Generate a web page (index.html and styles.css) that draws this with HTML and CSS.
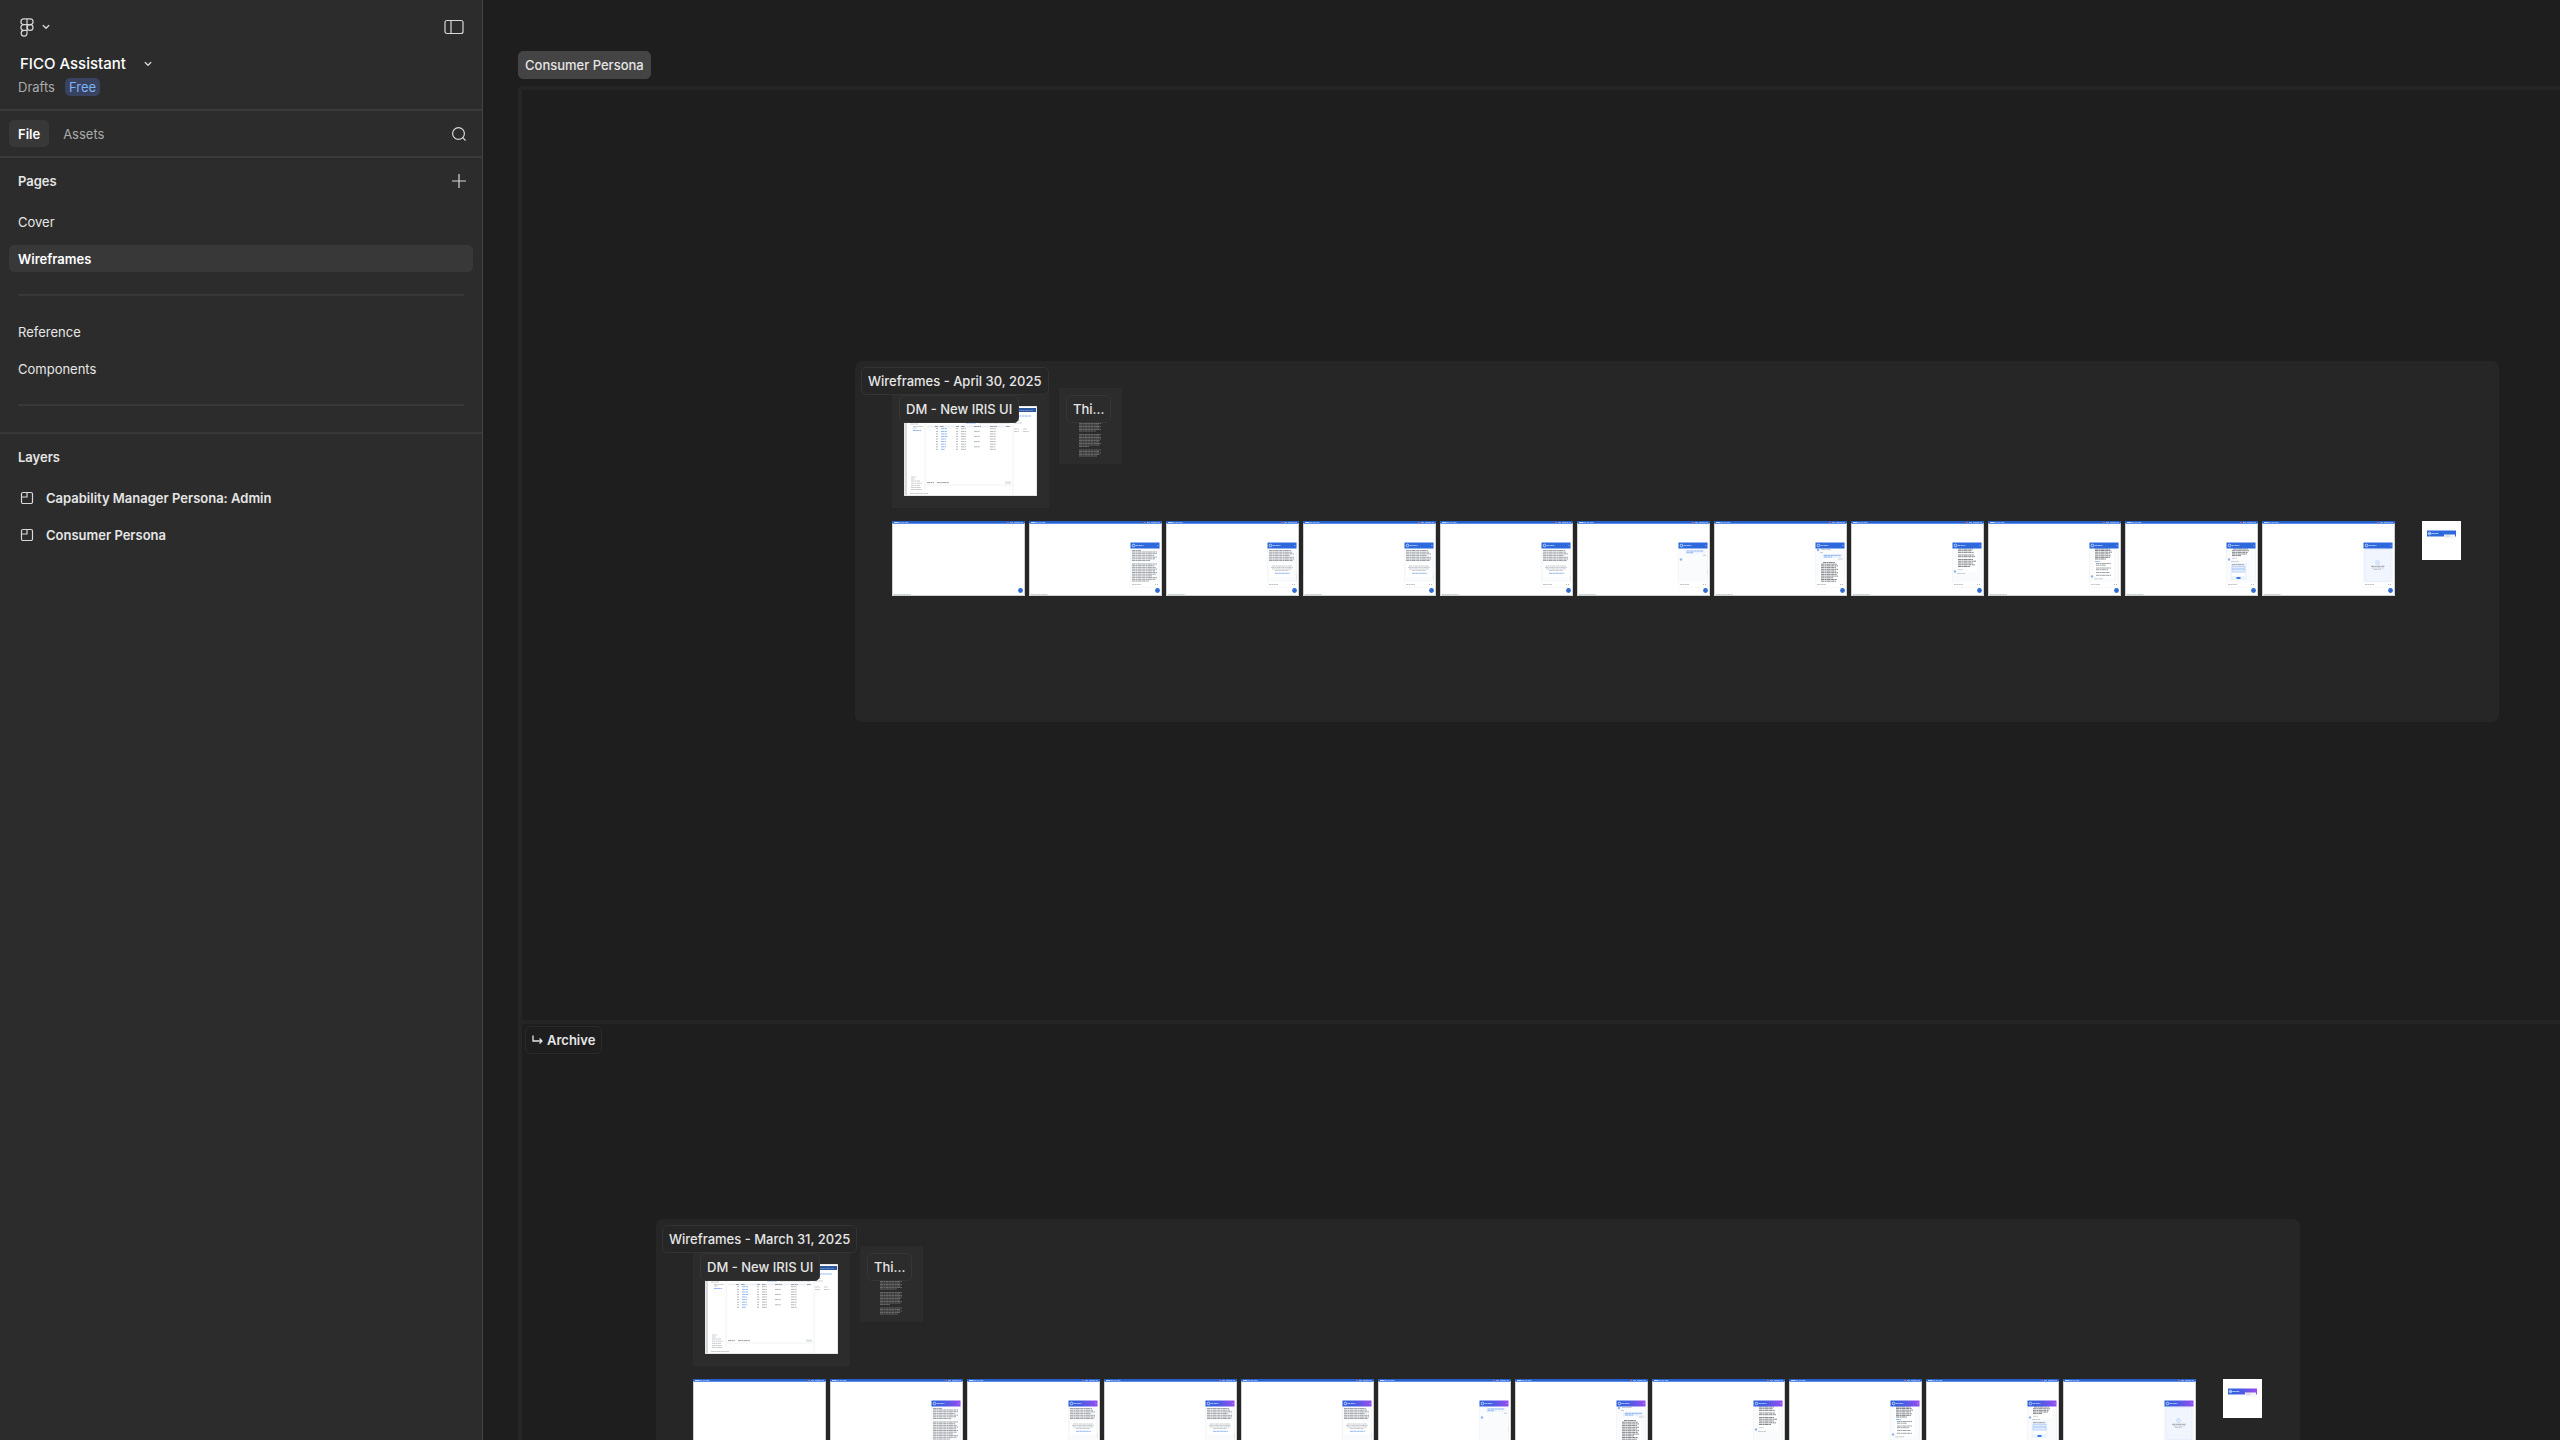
FILE: index.html
```
<!DOCTYPE html>
<html lang="en">
<head>
    <meta charset="UTF-8">
    <title>FICO Assistant</title>
    <link rel="stylesheet" href="styles.css">
</head>
<body>
    <!-- shared drawings for the canvas thumbnails -->
    <svg class="defs" width="0" height="0" aria-hidden="true">
        <defs>
            <linearGradient id="violet">
                <stop offset="0" stop-color="#2f62dc"/>
                <stop offset="0.45" stop-color="#4a5ce4"/>
                <stop offset="1" stop-color="#984df0"/>
            </linearGradient>
            <g id="screen">
                <rect width="133" height="75" fill="#fff"/>
                <rect width="133" height="2" fill="#2860cb"/>
                <rect y="2" width="133" height="1" fill="#5b8ee8"/>
                <path d="M2 1.5h4" stroke="#c4d6f8"/>
                <path d="M6 1.5h11" stroke="#7ea3e6" stroke-dasharray="3 .5"/>
                <path d="M115 1.5h2" stroke="#d0605c"/>
                <path d="M118 1.5h13" stroke="#7ea3e6" stroke-dasharray="3 1 6 .5"/>
                <path d="M2 73.5h17" stroke="#a9bdb5" stroke-width=".7" stroke-dasharray="2 .4"/>
                <path d="M.5 2v72.5h132V2" fill="none" stroke="#bbb" stroke-width=".7"/>
                <circle cx="128.5" cy="69.5" r="2.4" fill="#3169d2"/>
            </g>
            <g id="panel">
                <rect x="101" y="22" width="30" height="44.5" fill="#f1f2f3"/>
                <rect x="101.5" y="22" width="29" height="44" fill="#fafbfc"/>
                <rect x="101.5" y="61" width="29" height="5" fill="#fff"/>
                <path d="M103 63.5h9" stroke="#b3b7bc" stroke-width=".8" stroke-dasharray="2 .4"/>
                <path d="M126 63.5h1M128 63.5h1" stroke="#b3b7bc"/>
            </g>
            <g id="logo">
                <circle cx="104.5" cy="24.5" r="1.3" fill="none" stroke="#dbe7ff" stroke-width=".8"/>
                <path d="M106.5 24.5h8" stroke="#a8c4f7" stroke-width=".9" stroke-dasharray="3 .4"/>
                <path d="M128 24.5h1.5" stroke="#a8c4f7" stroke-width=".5"/>
            </g>
            <g id="head-blue">
                <rect x="101.5" y="21.5" width="29" height="6" fill="#2d69dd"/>
                <use href="#logo"/>
            </g>
            <g id="head-violet">
                <rect x="101.5" y="21.5" width="29" height="6" fill="url(#violet)"/>
                <use href="#logo"/>
            </g>
            <g id="chat-intro">
                <use href="#panel"/>
                <path class="ink" d="M103 29.5h9M103 31h25M103 32.7h25M103 34.4h22M103 36.1h25M103 37.8h23M103 39.5h18M103 43h25M103 44.7h22M103 46.4h24M103 48.1h25M103 49.8h23M103 51.5h25M103 53.2h24M103 54.9h20M103 56.6h25M103 58.3h24M103 60h17"/>
            </g>
            <g id="chat-consent">
                <use href="#panel"/>
                <path class="ink" d="M103 29.5h22M103 31.2h23M103 32.9h25M103 34.6h21M103 36.3h25M103 38h25M103 39.5h24"/>
                <rect x="103.5" y="42" width="25" height="14" fill="#fff"/>
                <path class="ink pale" d="M106 45h20M105 46.5h22M106 48h20M109 49.5h14"/>
                <path class="link" d="M109 52.3h15"/>
                <path d="M130.5 54v5" stroke="#dadde1" stroke-width=".6"/>
            </g>
            <g id="chat-question">
                <use href="#panel"/>
                <rect x="108" y="29" width="20" height="4" fill="#f0f5fe"/>
                <path class="link" d="M109.5 30h17M109.5 31.7h7"/>
                <path class="ink pale" d="M126 34.3h3"/>
                <rect x="106" y="36" width="4" height="4" fill="#fff"/>
                <circle class="bot" cx="104" cy="38.5" r="1.2"/>
                <path d="M130.5 48v5" stroke="#dadde1" stroke-width=".6"/>
            </g>
            <g id="chat-answer">
                <use href="#panel"/>
                <circle class="bot" cx="104" cy="29" r="1.2"/>
                <path class="ink pale" d="M107 28.5h10M106 31.5h3M124 38h5"/>
                <rect x="108" y="33" width="20" height="4" fill="#eaf1fe"/>
                <path class="link" d="M110 34.4h17M110 36h8"/>
                <rect x="106" y="40" width="20" height="21" fill="#fff"/>
                <path class="ink dark" d="M109 41.5h12M107 43.2h16M107 44.9h17M107 46.6h15M107 48.3h17M107 50h15M107 51.7h17M107 53.4h16M107 55.1h17M107 56.8h12M107 58.5h16M107 60.2h15"/>
            </g>
            <g id="chat-scrolled">
                <use href="#panel"/>
                <rect x="106" y="28" width="20" height="23" fill="#fff"/>
                <path class="ink dark" d="M107 28h15M107 29.7h14M107 31.4h16M107 34h16M107 35.7h17M107 38.5h15M107 40.2h18M107 42h15M107 43.8h17M107 45.5h12"/>
                <path class="ink pale" d="M107 48.7h5M106 52.5h8"/>
                <circle class="bot" cx="104" cy="50.5" r="1.2"/>
            </g>
            <g id="chat-sources">
                <use href="#panel"/>
                <rect x="106" y="28" width="20" height="29" fill="#fff"/>
                <path class="ink dark" d="M107 28h15M107 29.5h16M107 31.2h17M107 32.9h15M107 34.8h16M107 36.4h15M107 38h11"/>
                <path class="link" d="M107 40.5h5"/>
                <path class="ink" d="M108 42.5h15M108 44.2h10M108 47h15M108 48.7h12M108 51.5h14M108 54.3h15"/>
                <path class="ink pale" d="M106 57.8h9"/>
                <circle class="bot" cx="104" cy="55.5" r="1.2"/>
            </g>
            <g id="chat-feedback">
                <use href="#panel"/>
                <rect x="106" y="28" width="20" height="11" fill="#fff"/>
                <path class="ink dark" d="M108 28h15M107 29.7h17M107 31.4h16M107 33h15M107 34.6h9"/>
                <path class="ink pale" d="M107 37.3h5M106 40.5h8"/>
                <circle class="bot" cx="104" cy="38.5" r="1.2"/>
                <rect x="105.5" y="42" width="16" height="17" fill="#edf3fd"/>
                <path class="ink" d="M107 43.7h12"/>
                <rect x="107" y="45.3" width="13" height="2.4" fill="#e0ebfd" stroke="#9fc0f6" stroke-width=".5"/>
                <rect x="107" y="48.6" width="13" height="2.4" fill="#e0ebfd" stroke="#9fc0f6" stroke-width=".5"/>
                <rect x="107" y="52" width="13" height="3" fill="#fff"/>
                <rect x="111.5" y="56" width="4" height="2" fill="#3f7ce2"/>
            </g>
            <g id="chat-loading">
                <use href="#panel"/>
                <rect x="103" y="28.5" width="26" height="32" rx="1" fill="#f1f6fe" stroke="#dfe9fb" stroke-width=".7"/>
                <circle cx="115.5" cy="41.5" r="1.9" fill="#e2edfd" stroke="#9fc0f6" stroke-width=".5"/>
                <path class="ink" d="M109 45.3h14"/>
                <path class="ink pale" d="M110 47h12M112 48.5h7"/>
            </g>
            <g id="iris">
                <rect width="133" height="90" fill="#fff"/>
                <path d="M0 0h133v90H0z" fill="none" stroke="#cfcfcf"/>
                <rect x="1" y="2" width="131" height="4" fill="#2c579c"/>
                <path d="M115 4.5h14" stroke="#5f84bd" stroke-dasharray="5 .5"/>
                <rect x="1" y="6" width="2" height="83" fill="#d9dadb"/>
                <path d="M21 16v68M109 13v76M22 79h87" stroke="#f1f2f3" fill="none"/>
                <path class="link" d="M9 24.5h8M62 17h10M114 10h13"/>
                <path class="ink pale" d="M6 18h8M9 20.5h10M9 22h4M75 17h31M110 14.5h6M110 17h8M110 23h5M119 23h4M110 25.5h5M119 25.5h6M6 87.5h18"/>
                <rect x="23" y="19.5" width="84" height="2" fill="#eef2f8"/>
                <path class="ink" d="M31 20.5h3M36 20.5h4M52 20.5h3M57 20.5h4M70 20.5h7M86 20.5h7M102 20.5h4"/>
                <path class="ink cell" d="M32 22.7h2M32 25.4h2M32 27.9h2M32 30.4h2M32 33h2M32 35.6h2M32 38.2h2M32 40.8h2M32 43.3h2M52 22.7h2M52 25.4h2M52 27.9h2M52 30.4h2M52 33h2M52 35.6h2M52 38.2h2M52 40.8h2M52 43.3h2M57 22.7h5M57 25.4h5M57 27.9h5M57 30.4h5M57 33h5M57 35.6h5M57 38.2h5M57 40.8h5M57 43.3h5M70 25.4h6M70 30.4h6M70 35.6h6M70 40.8h6M86 22.7h6M86 25.4h6M86 27.9h6M86 30.4h6M86 33h6M86 35.6h6M86 38.2h6M86 40.8h5M86 43.3h6"/>
                <path class="link" d="M37 22.7h6M37 25.4h6M37 27.9h6M37 30.4h7M37 33h5M37 35.6h5M37 38.2h5M37 40.8h5M37 43.3h4"/>
                <path class="ink pale" d="M7 71h5M7 73h4M7 75h9M7 77.2h11M7 79.4h9M7 81.5h10M7 83.5h11"/>
                <path class="ink" d="M23 76.6h7M33 76.6h12"/>
                <rect x="101" y="75.5" width="6" height="2.2" fill="#dce1e9"/>
            </g>
            <g id="note">
                <path class="note-text" d="M0 .5h22M0 2h20M0 3.5h22M0 5h21M0 6.5h22M0 8h17M0 11.5h22M0 13h21M0 14.5h22M0 16h22M0 17.5h21M0 19h20M0 20.5h22M0 22h21M0 23.5h10M0 27h22M0 28.5h20M0 30h22M0 31.5h20M0 33h18"/>
            </g>
            <g id="menu-items">
                <path d="M6.5 12.5h10" stroke="#a8c4f7" stroke-dasharray="3 .4"/>
                <circle cx="7.5" cy="12.5" r="1.3" fill="none" stroke="#dbe7ff" stroke-width=".8"/>
                <rect x="22" y="13.5" width="11" height="4" fill="#f4f4f6"/>
                <path class="ink pale" d="M23 15h5"/>
            </g>
            <symbol id="section-icon" viewBox="0 0 14 14">
                <path d="M3 1.5h8a1.5 1.5 0 0 1 1.500 1.500v8a1.500 1.500 0 0 1-1.500 1.500H3A1.500 1.500 0 0 1 1.500 11V3A1.500 1.500 0 0 1 3 1.500zM1.500 6H7V1.500" fill="none" stroke="#d8d8d8" stroke-width="1.200"/>
            </symbol>
            <symbol id="chevron" viewBox="0 0 8 6">
                <path d="M1.200 1.500 4 4.300 6.800 1.500" fill="none" stroke="#d8d8d8" stroke-width="1.300" stroke-linecap="round"/>
            </symbol>
        </defs>
    </svg>

    <aside class="sidebar">
        <header class="file-header">
            <div class="toolbar">
                <button class="icon-btn main-menu" aria-label="Main menu">
                    <svg width="14" height="19" viewBox="0 0 14 19" fill="none" stroke="#d8d8d8" stroke-width="1.200">
                        <path d="M7 .8H3.800a2.900 2.900 0 0 0 0 5.800H7zM7 .8h3.200a2.900 2.900 0 0 1 0 5.800H7zM7 6.600H3.800a2.900 2.900 0 0 0 0 5.800H7zM7 12.400H3.800A2.900 2.900 0 1 0 7 15.300z"/>
                        <circle cx="10.100" cy="9.500" r="2.900"/>
                    </svg>
                    <svg width="8" height="6"><use href="#chevron"/></svg>
                </button>
                <button class="icon-btn" aria-label="Minimize UI">
                    <svg width="20" height="16" viewBox="0 0 20 16" fill="none" stroke="#d8d8d8" stroke-width="1.200">
                        <rect x="1" y="1.500" width="18" height="13" rx="2"/>
                        <path d="M7 1.500v13"/>
                    </svg>
                </button>
            </div>
            <button class="icon-btn file-name">
                FICO Assistant
                <svg width="8" height="6"><use href="#chevron"/></svg>
            </button>
            <div class="location">
                <a href="#drafts">Drafts</a>
                <span class="badge">Free</span>
            </div>
        </header>

        <nav class="tabs">
            <button class="tab active">File</button>
            <button class="tab">Assets</button>
            <button class="icon-btn search" aria-label="Find">
                <svg width="14" height="14" viewBox="0 0 14 14" fill="none" stroke="#d8d8d8" stroke-width="1.200">
                    <circle cx="6.500" cy="6.500" r="5.900"/>
                    <path d="M10.700 10.700 13.500 13.500"/>
                </svg>
            </button>
        </nav>

        <section class="pages">
            <div class="panel-title">
                <h2>Pages</h2>
                <button class="icon-btn" aria-label="Add new page">
                    <svg width="14" height="14" viewBox="0 0 14 14" stroke="#d8d8d8" stroke-width="1.200">
                        <path d="M7 0v14M0 7h14"/>
                    </svg>
                </button>
            </div>
            <ul class="list">
                <li><a class="row" href="#cover">Cover</a></li>
                <li><a class="row selected" href="#wireframes">Wireframes</a></li>
                <li class="separator"></li>
                <li><a class="row" href="#reference">Reference</a></li>
                <li><a class="row" href="#components">Components</a></li>
                <li class="separator"></li>
            </ul>
        </section>

        <section class="layers">
            <div class="panel-title">
                <h2>Layers</h2>
            </div>
            <ul class="list">
                <li><a class="row layer" href="#admin"><svg width="14" height="14"><use href="#section-icon"/></svg>Capability Manager Persona: Admin</a></li>
                <li><a class="row layer" href="#consumer"><svg width="14" height="14"><use href="#section-icon"/></svg>Consumer Persona</a></li>
            </ul>
        </section>
    </aside>

    <main class="canvas">
        <span class="label label-top">Consumer Persona</span>
        <div class="zone zone-consumer"></div>
        <div class="zone zone-archive">
            <span class="label label-archive">
                <svg width="11" height="10" viewBox="0 0 11 10" fill="none" stroke="#e6e6e6" stroke-width="1.300">
                    <path d="M1 .5V6h9M7.500 3.500 10 6 7.500 8.500"/>
                </svg>
                Archive
            </span>
        </div>

        <section class="board board-april">
            <span class="label label-board">Wireframes - April 30, 2025</span>
            <div class="notes">
                <div class="frame frame-iris">
                    <span class="label label-frame">DM - New IRIS UI</span>
                    <svg width="133" height="90"><use href="#iris"/></svg>
                </div>
                <div class="frame frame-note">
                    <span class="label label-frame">Thi...</span>
                    <svg width="22" height="34"><use href="#note"/></svg>
                </div>
            </div>
            <div class="screens">
                <svg width="133" height="75"><use href="#screen"/></svg>
                <svg width="133" height="75"><use href="#screen"/><use href="#chat-intro"/><use href="#head-blue"/></svg>
                <svg width="133" height="75"><use href="#screen"/><use href="#chat-consent"/><use href="#head-blue"/></svg>
                <svg width="133" height="75"><use href="#screen"/><use href="#chat-consent"/><use href="#head-blue"/></svg>
                <svg width="133" height="75"><use href="#screen"/><use href="#chat-consent"/><use href="#head-blue"/></svg>
                <svg width="133" height="75"><use href="#screen"/><use href="#chat-question"/><use href="#head-blue"/></svg>
                <svg width="133" height="75"><use href="#screen"/><use href="#chat-answer"/><use href="#head-blue"/></svg>
                <svg width="133" height="75"><use href="#screen"/><use href="#chat-scrolled"/><use href="#head-blue"/></svg>
                <svg width="133" height="75"><use href="#screen"/><use href="#chat-sources"/><use href="#head-blue"/></svg>
                <svg width="133" height="75"><use href="#screen"/><use href="#chat-feedback"/><use href="#head-blue"/></svg>
                <svg width="133" height="75"><use href="#screen"/><use href="#chat-loading"/><use href="#head-blue"/></svg>
                <svg class="menu-screen" width="39" height="39">
                    <rect width="39" height="39" fill="#fff"/>
                    <rect x="5" y="9.500" width="29" height="6" fill="#2d69dd"/>
                    <use href="#menu-items"/>
                </svg>
            </div>
        </section>

        <section class="board board-march">
            <span class="label label-board">Wireframes - March 31, 2025</span>
            <div class="notes">
                <div class="frame frame-iris">
                    <span class="label label-frame">DM - New IRIS UI</span>
                    <svg width="133" height="90"><use href="#iris"/></svg>
                </div>
                <div class="frame frame-note">
                    <span class="label label-frame">Thi...</span>
                    <svg width="22" height="34"><use href="#note"/></svg>
                </div>
            </div>
            <div class="screens">
                <svg width="133" height="75"><use href="#screen"/></svg>
                <svg width="133" height="75"><use href="#screen"/><use href="#chat-intro"/><use href="#head-violet"/></svg>
                <svg width="133" height="75"><use href="#screen"/><use href="#chat-consent"/><use href="#head-violet"/></svg>
                <svg width="133" height="75"><use href="#screen"/><use href="#chat-consent"/><use href="#head-violet"/></svg>
                <svg width="133" height="75"><use href="#screen"/><use href="#chat-consent"/><use href="#head-violet"/></svg>
                <svg width="133" height="75"><use href="#screen"/><use href="#chat-question"/><use href="#head-violet"/></svg>
                <svg width="133" height="75"><use href="#screen"/><use href="#chat-answer"/><use href="#head-violet"/></svg>
                <svg width="133" height="75"><use href="#screen"/><use href="#chat-scrolled"/><use href="#head-violet"/></svg>
                <svg width="133" height="75"><use href="#screen"/><use href="#chat-sources"/><use href="#head-violet"/></svg>
                <svg width="133" height="75"><use href="#screen"/><use href="#chat-feedback"/><use href="#head-violet"/></svg>
                <svg width="133" height="75"><use href="#screen"/><use href="#chat-loading"/><use href="#head-violet"/></svg>
                <svg class="menu-screen" width="39" height="39">
                    <rect width="39" height="39" fill="#fff"/>
                    <rect x="5" y="9.500" width="29" height="6" fill="url(#violet)"/>
                    <use href="#menu-items"/>
                </svg>
            </div>
        </section>
    </main>
</body>
</html>
```
FILE: styles.css
```
* {
    box-sizing: border-box;
}

body {
    display: grid;
    grid-template-columns: 483px 1fr;
    height: 100vh;
    margin: 0;
    overflow: hidden;
    background-color: #1e1e1e;
    color: #e6e6e6;
    font-family: Inter, sans-serif;
    font-size: 13px;
    line-height: 18px;
}

svg {
    display: block;
    flex: none;
}

a {
    color: inherit;
    text-decoration: none;
}

.defs {
    position: absolute;
}

.icon-btn {
    display: flex;
    align-items: center;
    padding: 0;
    border: 0;
    background: none;
    color: inherit;
    font: inherit;
    cursor: pointer;
}

/* Sidebar */
.sidebar {
    border-right: 1px solid #444;
    background-color: #2c2c2c;
}

.file-header {
    height: 111px;
    padding: 17px 18px 0 18px;
    border-bottom: 2px solid #3a3a3a;
}

.toolbar {
    display: flex;
    justify-content: space-between;
    height: 20px;
    padding-left: 2px;
}

.main-menu {
    gap: 8px;
}

.file-name {
    gap: 18px;
    height: 20px;
    margin-top: 17px;
    padding-left: 2px;
    color: #fff;
    font-size: 15px;
    font-weight: 500;
}

.location {
    display: flex;
    align-items: center;
    gap: 10px;
    margin-top: 4px;
    color: #aaa;
}

.badge {
    padding: 0 4px;
    border-radius: 5px;
    background-color: #394360;
    color: #7cb4f5;
}

.tabs {
    display: flex;
    align-items: center;
    gap: 5px;
    height: 47px;
    padding: 0 16px 0 9px;
    border-bottom: 2px solid #3a3a3a;
}

.tab {
    height: 27px;
    padding: 0 9px;
    border: 0;
    border-radius: 5px;
    background: none;
    color: #aaa;
    font: inherit;
    cursor: pointer;
}

.tab.active {
    background-color: #383838;
    color: #fff;
    font-weight: 600;
}

.search {
    margin-left: auto;
}

.pages {
    padding-bottom: 14px;
    border-bottom: 2px solid #383838;
}

.panel-title {
    display: flex;
    align-items: center;
    justify-content: space-between;
    height: 46px;
    padding: 0 16px 0 18px;
}

.panel-title h2 {
    margin: 0;
    font-size: 13px;
    font-weight: 600;
}

.list {
    display: flex;
    flex-direction: column;
    gap: 10px;
    margin: 0;
    padding: 4px 9px 0;
    list-style: none;
}

.row {
    display: flex;
    align-items: center;
    height: 27px;
    padding: 0 9px;
    border-radius: 5px;
}

.row.selected {
    background-color: #383838;
    color: #fff;
    font-weight: 600;
}

.layer {
    gap: 12px;
    padding-left: 11px;
    font-weight: 600;
}

.separator {
    height: 26px;
    margin: 0 9px;
    padding-top: 12px;
}

.separator::after {
    content: "";
    display: block;
    height: 2px;
    background-color: #383838;
}

/* Canvas */
.canvas {
    position: relative;
    overflow: hidden;
}

.label {
    display: flex;
    align-items: center;
    position: absolute;
    z-index: 1;
    height: 28px;
    padding: 0 6px;
    border: 1px solid #333;
    border-radius: 5px;
    font-weight: 500;
    white-space: nowrap;
}

.label-top {
    top: 51px;
    left: 35px;
    border-color: #444;
    background-color: #444;
}

.zone {
    position: absolute;
    left: 35px;
    right: -10px;
    bottom: -10px;
    border: 4px solid #252525;
}

.zone-consumer {
    top: 86px;
    border-radius: 4px;
}

.zone-archive {
    top: 1020px;
}

.label-archive {
    top: 2px;
    left: 3px;
    gap: 4px;
    border-color: #2a2a2a;
    background-color: #1e1e1e;
    font-weight: 600;
}

.board {
    position: absolute;
    height: 361px;
    padding: 27px 38px 0 37px;
    border-radius: 7px;
    background-color: #262626;
}

.board-april {
    top: 361px;
    left: 372px;
}

.board-march {
    top: 1219px;
    left: 173px;
}

.label-board {
    top: 6px;
    left: 6px;
    z-index: 2;
    background-color: #262626;
}

.notes {
    display: flex;
    align-items: flex-start;
    gap: 10px;
    height: 133px;
}

.frame {
    position: relative;
    background-color: #2c2c2c;
}

.frame-iris {
    padding: 18px 12px 12px;
}

.frame-note {
    padding: 35px 21px 7px 20px;
}

.label-frame {
    top: 7px;
    left: 7px;
    border-color: #363636;
    background-color: #2c2c2c;
}

.screens {
    display: flex;
    align-items: flex-start;
    gap: 4px;
}

.menu-screen {
    margin-left: 23px;
}

/* Thumbnail details */
.ink {
    fill: none;
    stroke: #868b91;
    stroke-width: 0.8;
    stroke-dasharray: 3 0.4 2 0.3 4 0.5;
}

.ink.dark {
    stroke: #62676d;
}

.ink.pale {
    stroke: #bbbfc4;
}

.ink.cell {
    stroke: #a0a4a9;
}

.link {
    fill: none;
    stroke: #74a4ee;
    stroke-width: 0.8;
    stroke-dasharray: 3 0.4;
}

.bot {
    fill: #8fb3ee;
}

.note-text {
    fill: none;
    stroke: #777;
    stroke-width: 0.8;
    stroke-dasharray: 3 0.4 2 0.3;
}
```
